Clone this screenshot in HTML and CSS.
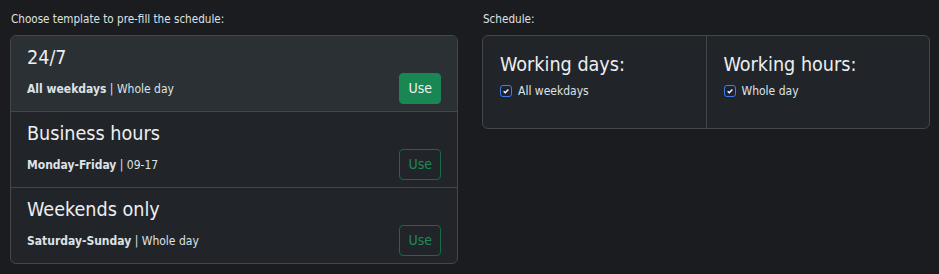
FILE: index.html
```html
<!DOCTYPE html>
<html lang="en">
<head>
  <meta charset="UTF-8" />
  <title>Schedule templates</title>
  <link rel="stylesheet" href="styles.css">
</head>
<body>
  <div class="row">
    <!-- Templates -->
    <section class="col">
      <label class="caption">Choose template to pre-fill the schedule:</label>
      <ul class="list">
        <li class="item active">
          <h5>24/7</h5>
          <div class="item-row">
            <span><b>All weekdays</b> | Whole day</span>
            <button class="btn btn-success">Use</button>
          </div>
        </li>
        <li class="item">
          <h5>Business hours</h5>
          <div class="item-row">
            <span><b>Monday-Friday</b> | 09-17</span>
            <button class="btn btn-outline">Use</button>
          </div>
        </li>
        <li class="item">
          <h5>Weekends only</h5>
          <div class="item-row">
            <span><b>Saturday-Sunday</b> | Whole day</span>
            <button class="btn btn-outline">Use</button>
          </div>
        </li>
      </ul>
    </section>

    <!-- Current schedule -->
    <section class="col">
      <label class="caption">Schedule:</label>
      <div class="schedule">
        <div class="cell">
          <h5>Working days:</h5>
          <label class="check"><span class="box"><svg viewBox="0 0 12 12"><path d="M3.2 6.2l1.9 1.9 3.8-3.9" /></svg></span>All weekdays</label>
        </div>
        <div class="cell">
          <h5>Working hours:</h5>
          <label class="check"><span class="box"><svg viewBox="0 0 12 12"><path d="M3.2 6.2l1.9 1.9 3.8-3.9" /></svg></span>Whole day</label>
        </div>
      </div>
    </section>
  </div>
</body>
</html>
```

FILE: styles.css
```css
body { margin: 0; background: #1b1c1f; color: #dee2e6; font-family: "DejaVu Sans Condensed", "DejaVu Sans", sans-serif; font-stretch: condensed; font-size: 12px; }
.row { display: flex; gap: 24px; padding: 11px 9px 10px 10px; }
.col { flex: 1; }
.caption { display: block; margin: 0 0 8px 1px; font-size: 11.6px; line-height: 16px; color: #dee2e6; }
.list { list-style: none; margin: 0; padding: 0; border: 1px solid #43474c; border-radius: 6px; background: #212529; overflow: hidden; }
.item { padding: 8px 16px 7px; border-top: 1px solid #43474c; }
.item:first-child { border-top: none; }
.item.active { background: #2b3035; }
h5 { margin: 0; font-size: 19.6px; font-weight: normal; line-height: 28px; color: #eceef0; }
.item-row { display: flex; align-items: center; justify-content: space-between; margin-top: 1px; }
.item-row b { font-weight: bold; }
.btn { font-family: inherit; font-size: 14px; line-height: 21px; padding: 4px 8px; border-radius: 4px; cursor: pointer; }
.btn-success { background: #198754; border: 1px solid #198754; color: #f0f0f0; }
.btn-outline { background: transparent; border: 1px solid #176b45; color: #1f8a56; }
.schedule { display: flex; border: 1px solid #43474c; border-radius: 6px; background: #212529; }
.cell { flex: 1; padding: 15px 17px 30px; }
.cell + .cell { border-left: 1px solid #43474c; }
.check { display: flex; align-items: center; gap: 6px; margin-top: 5px; }
.box { width: 10px; height: 10px; border: 1px solid #3d7ee8; border-radius: 3px; background: #1b2230; display: flex; }
.box svg { width: 10px; height: 10px; fill: none; stroke: #fff; stroke-width: 1.6; }
```
